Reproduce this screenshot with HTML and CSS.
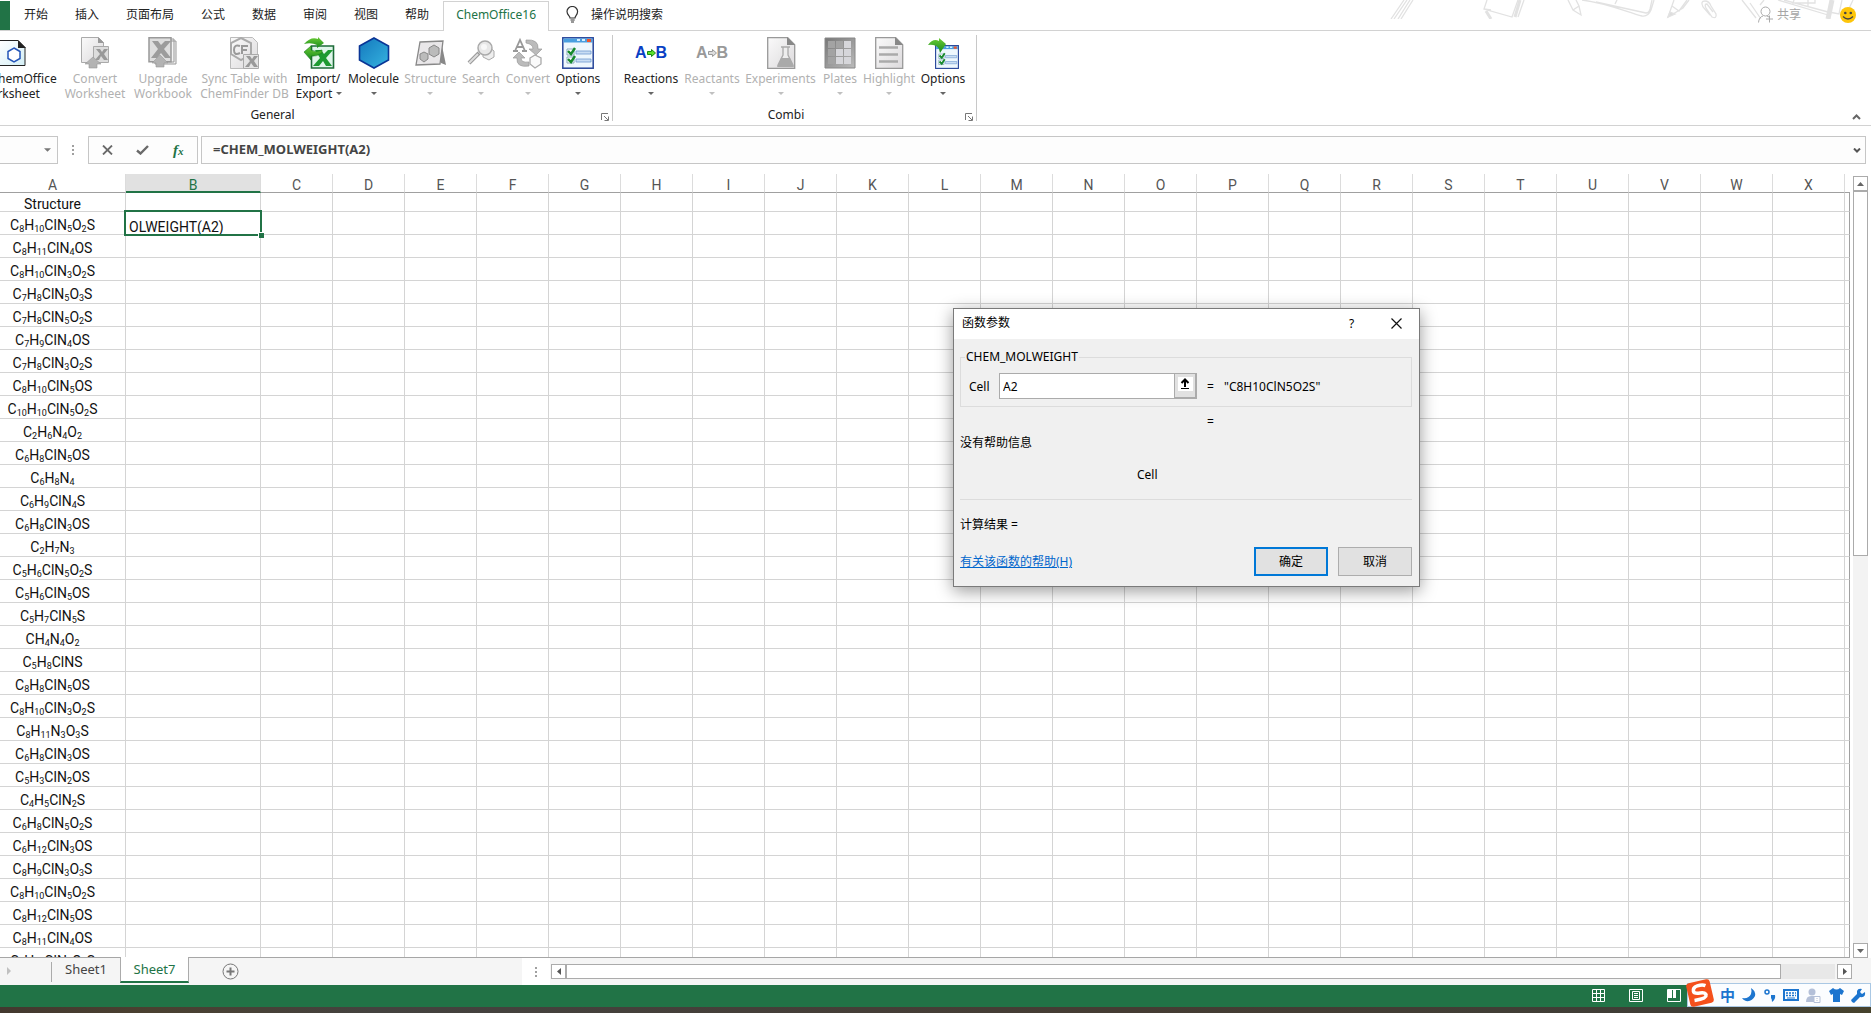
FILE: index.html
```
<!doctype html>
<html lang="zh-CN">
<head>
  <meta charset="utf-8">
  <title>Excel</title>
  <link rel="stylesheet" href="styles.css">
</head>

<body onload='start()'>

  <!-- gradients and arrows shared by the icons -->
  <svg class="defs" width="0" height="0">
    <defs>
      <linearGradient id="hexBlue" x1="0" y1="0" x2="1" y2="1"><stop offset="0" stop-color="#1478bd"/><stop offset="1" stop-color="#36b4e0"/></linearGradient>
      <linearGradient id="sheetGray" x1="0" y1="0" x2="1" y2="1"><stop offset="0" stop-color="#fafafa"/><stop offset="1" stop-color="#dcdadc"/></linearGradient>
      <linearGradient id="sheetBlue" x1="0" y1="0" x2="1" y2="1"><stop offset="0" stop-color="#ffffff"/><stop offset="1" stop-color="#d3eef5"/></linearGradient>
      <linearGradient id="plateGray" x1="0" y1="0" x2="1" y2="1"><stop offset="0" stop-color="#777"/><stop offset="1" stop-color="#bbb"/></linearGradient>
      <linearGradient id="leaf" x1="0" y1="0" x2="0" y2="1"><stop offset="0" stop-color="#6ccc35"/><stop offset="1" stop-color="#168a1c"/></linearGradient>
      <symbol id="tri" viewBox="0 0 6 3"><path d="M0 0h6L3 3z"/></symbol>
      <symbol id="launcher" viewBox="0 0 8 8"><path d="M.5 7V.5H7M3 3l4 4M7.500 3.500v4h-4" fill="none" stroke="#777"/></symbol>
      <symbol id="window" viewBox="0 0 32 32">
        <rect x=".8" y=".8" width="30.400" height="30.400" fill="#eef7fd" stroke="#27469a" stroke-width="1.500"/>
        <rect x="1.500" y="1.500" width="29" height="4" fill="#4a9fdf"/>
        <path d="M15 2h3v2h-3zM20 2h3v2h-3z" fill="#d8f0ff"/><path d="M25 2h4v3h-4z" fill="#f0552c"/>
        <path d="M14 14h15v3H14zM14 22h15v3H14z" fill="#c9ddf3" stroke="#6f9bce" stroke-width=".8"/>
        <path d="M5 12h7v6H5zM5 20h7v6H5z" fill="#fff" stroke="#8ab"/>
        <path d="M6 14l3 3 4-6M6 22l3 3 4-6" fill="none" stroke="#168a2c" stroke-width="2.400"/>
      </symbol>
    </defs>
  </svg>

  <div class="tabs">
    <div class="file"></div>
    <button class="tab">开始</button>
    <button class="tab">插入</button>
    <button class="tab">页面布局</button>
    <button class="tab">公式</button>
    <button class="tab">数据</button>
    <button class="tab">审阅</button>
    <button class="tab">视图</button>
    <button class="tab">帮助</button>
    <button class="tab selected">ChemOffice16</button>
    <button class="tab tell">
      <svg width="13" height="17" viewBox="0 0 13 17" fill="none" stroke="#333" stroke-width="1.200"><path d="M4 12c0-2-3-3-3-6.500a5.300 5 0 0 1 10.600 0C11.600 9 9 10 9 12zM4.500 14h4.200M5 16h3"/></svg>
      操作说明搜索
    </button>
    <svg class="doodle" width="491" height="19" viewBox="0 0 491 19" fill="none" stroke="#e2e2e2" stroke-width="1.300">
      <path d="M11 19L24 0M14 19L27 0M18 19L30 0M21 19L33 0"/>
      <path d="M107 0l-3 9 28 8 6-17M138 17l6-17M104 9l7 1"/>
      <path d="M106 11l5 8M135 17l5-17" stroke-width="3"/>
      <path d="M188 0l5 10 8 5-2-9-3-6M193 10l6-4"/>
      <path d="M202 0c25 3 45 12 60 16q6 1 9-6l3-10M216 2l50 11q3 0 4-4l2-9M235 4l2-4"/>
      <path d="M294 0l-6 17 15-9 6-8M292 6l7 5 8-11"/>
      <path d="M288 17l2-5 5 2z" fill="#ddd"/>
      <path d="M330 15l-7-8q-3-6 2-6 4 0 6 5l5 8q1 5-4 3l-6-9q-2-4 1-4l6 8"/>
      <path d="M362 0l14 18M370 3l11 16M384 0l-4 5"/>
      <path d="M398 0l50 15M404 0l44 12M414 0l-1 3h22V0M428 0v7"/>
      <path d="M452 0l-4 19" stroke-width="5"/>
      <path d="M462 0l-3 14-10-2M473 0l-7 15"/>
    </svg>
    <button class="share">
      <svg width="16" height="17" viewBox="0 0 16 17" fill="none" stroke="#aaa"><circle cx="7.500" cy="5.500" r="4.500"/><path d="M.5 16.500Q1 11 5 10M9 10l2 1M11.500 9.500v7M8 13h7"/></svg>
      共享
    </button>
    <button class="smile">
      <svg width="16" height="16" viewBox="0 0 16 16"><circle cx="8" cy="8" r="8" fill="#fdc50a"/><circle cx="5.300" cy="6" r="1.300" fill="#444"/><circle cx="10.800" cy="6" r="1.300" fill="#444"/><path d="M3 9.500q5 5 10 0" fill="none" stroke="#444" stroke-width="1.200"/></svg>
    </button>
  </div>

  <div class="ribbon">
    <div class="group general">
      <div class="tools">
        <button class="tool">
          <svg width="32" height="32" viewBox="0 0 32 32"><path d="M5 3.500h19l7 7v18H5z" fill="url(#sheetBlue)" stroke="#222"/><path d="M24 3v8h8z" fill="#222"/><path d="M20 11l6 3.500v7L20 25l-6-3.500v-7z" fill="#fff" stroke="#2455b8" stroke-width="1.500"/></svg>
          <span>New ChemOffice<br>Worksheet</span>
        </button>
        <button class="tool" disabled>
          <svg width="32" height="32" viewBox="0 0 32 32"><path d="M2.500.5h17l5 5v20h-22z" fill="url(#sheetGray)" stroke="#aaa"/><path d="M19 0v6h6z" fill="#999"/><path d="M14.500 9.500h15v16h-15z" fill="#ddd" stroke="#aaa"/><path d="M17 12h4l2 3 2-3h4l-4 5 4 6h-4l-3-4-2 4h-4l5-6z" fill="#999"/><path d="M14 20l8 7h-4v4h-8v-4H6z" fill="#b3b3b3" stroke="#999" stroke-width=".6"/></svg>
          <span>Convert<br>Worksheet</span>
        </button>
        <button class="tool" disabled>
          <svg width="32" height="32" viewBox="0 0 32 32"><path d="M8 4h21v23H8zM6 2h21v23H6z" fill="#f4f4f4" stroke="#999"/><path d="M2 .8h22v24H2z" fill="#dedede" stroke="#999" stroke-width="1.500"/><path d="M5 4h6l3 4 4-4h6l-7 8 7 9h-6l-4-5-4 5H4l7-9z" fill="#9c9c9c"/><path d="M13 18l8 8h-4v4H9v-4H5z" fill="#b3b3b3" stroke="#999" stroke-width=".6"/></svg>
          <span>Upgrade<br>Workbook</span>
        </button>
        <button class="tool" disabled>
          <svg width="32" height="32" viewBox="0 0 32 32"><path d="M1.500.5h22l5 5v26h-27z" fill="url(#sheetGray)" stroke="#bbb"/><path d="M12 1l10 5v11l-10 6-10-6V6z" fill="none" stroke="#aaa" stroke-width="2"/><path d="M11 9q-6-2-6 4t6 3M13 17V9h6M13 13h5" fill="none" stroke="#999" stroke-width="2"/><path d="M14.500 17.500h15v14h-15z" fill="#e4e4e4" stroke="#aaa"/><path d="M17 19h4l2 3 2-3h4l-4 5 4 6h-4l-3-4-2 4h-4l5-6z" fill="#999"/></svg>
          <span>Sync Table with<br>ChemFinder DB</span>
        </button>
        <button class="tool">
          <svg width="32" height="32" viewBox="0 0 32 32"><path d="M8.500 9h22v22h-22z" fill="#dff5ea" stroke="#1d6b38" stroke-width="1.600"/><path d="M12 13h6l3 4 4-4h5l-7 8 6 8h-6l-3-5-4 5h-6l7-8z" fill="#1d9a31"/><path d="M1 7Q8-1 15 2V0l6 6-7 5V8Q8 5 1 7z" fill="url(#leaf)"/><path d="M19 16q-6 4-11 3v4l-7-8 7-6v4q5 3 11 0z" fill="url(#leaf)" stroke="#147a1c" stroke-width=".6"/></svg>
          <span>Import/<br>Export <svg class="arrow" width="6" height="3"><use href="#tri"/></svg></span>
        </button>
        <button class="tool">
          <svg width="32" height="32" viewBox="0 0 32 32"><path d="M16 1l14.500 8v14L16 31 1.500 23V9z" fill="url(#hexBlue)" stroke="#0a3596" stroke-width="1.600"/></svg>
          <span>Molecule<br><svg class="arrow" width="6" height="3"><use href="#tri"/></svg></span>
        </button>
        <button class="tool" disabled>
          <svg width="32" height="32" viewBox="0 0 32 32"><path d="M26 4l5 24-5-2z" fill="#888"/><path d="M5 5l23-1-3 23-24 1z" fill="#e9e7e9" stroke="#888" stroke-width="1.300"/><path d="M19 8l5 3v6l-5 3-5-3v-6zM9 15l4 2v5l-4 3-4-3v-5z" fill="#bbb" stroke="#888"/></svg>
          <span>Structure<br><svg class="arrow" width="6" height="3"><use href="#tri"/></svg></span>
        </button>
        <button class="tool" disabled>
          <svg width="32" height="32" viewBox="0 0 32 32"><path d="M24 10l5 4v6l-5 3-6-3v-6z" fill="#eee" stroke="#aaa"/><path d="M14 16L4 26" stroke="#999" stroke-width="4"/><path d="M13 17L4 26" stroke="#ddd" stroke-width="2"/><circle cx="20" cy="11" r="7" fill="#e8e8e8" stroke="#aaa" stroke-width="1.500"/><circle cx="19" cy="10" r="3" fill="#f8f8f8"/></svg>
          <span>Search<br><svg class="arrow" width="6" height="3"><use href="#tri"/></svg></span>
        </button>
        <button class="tool" disabled>
          <svg width="32" height="32" viewBox="0 0 32 32"><path d="M3 14l5-11 5 11M5 10h6M1 14h5M10 14h5" fill="none" stroke="#999" stroke-width="1.800"/><path d="M14 3q13-1 12 9h4l-6 6-7-6h4q0-5-7-6z" fill="#bbb" stroke="#999" stroke-width=".7"/><path d="M17 29Q4 31 5 21H1l6-6 6 6H9q0 5 8 4z" fill="#bbb" stroke="#999" stroke-width=".7"/><path d="M23 18l6 3v6l-6 4-5-4v-6z" fill="#fafafa" stroke="#aaa" stroke-width="1.300"/></svg>
          <span>Convert<br><svg class="arrow" width="6" height="3"><use href="#tri"/></svg></span>
        </button>
        <button class="tool">
          <svg width="32" height="32"><use href="#window"/></svg>
          <span>Options<br><svg class="arrow" width="6" height="3"><use href="#tri"/></svg></span>
        </button>
      </div>
      <div class="caption">General</div>
      <svg class="launcher" width="8" height="8"><use href="#launcher"/></svg>
    </div>

    <div class="group combi">
      <div class="tools">
        <button class="tool">
          <div class="ab">A<svg width="9" height="8" viewBox="0 0 9 8"><path d="M.5 2.500h4v-2l4 3.500-4 3.500v-2h-4z" fill="#5ee02b" stroke="#1b8a12"/></svg>B</div>
          <span>Reactions<br><svg class="arrow" width="6" height="3"><use href="#tri"/></svg></span>
        </button>
        <button class="tool" disabled>
          <div class="ab">A<svg width="9" height="8" viewBox="0 0 9 8"><path d="M.5 2.500h4v-2l4 3.500-4 3.500v-2h-4z" fill="#ddd" stroke="#999"/></svg>B</div>
          <span>Reactants<br><svg class="arrow" width="6" height="3"><use href="#tri"/></svg></span>
        </button>
        <button class="tool" disabled>
          <svg width="32" height="32" viewBox="0 0 32 32"><path d="M2.700.7h20l7 7v23.600h-27z" fill="url(#sheetGray)" stroke="#999" stroke-width="1.300"/><path d="M22 0v8h8z" fill="#888"/><path d="M16 10h9M18 10v8l-5 10h15l-5-10v-8" fill="#eee" stroke="#aaa" stroke-width="1.300"/><path d="M16 21h9l4 9H12z" fill="#aaa"/></svg>
          <span>Experiments<br><svg class="arrow" width="6" height="3"><use href="#tri"/></svg></span>
        </button>
        <button class="tool" disabled>
          <svg width="32" height="32" viewBox="0 0 32 32"><path d="M1 1h30v30H1z" fill="url(#plateGray)" stroke="#888"/><path d="M4 4h7v7H4zM4 12h7v7H4zM4 20h7v7H4zM12 4h7v7h-7z" fill="#a3a3a3"/><path d="M12 12h7v7h-7zM12 20h7v7h-7zM20 4h7v7h-7zM20 12h7v7h-7zM20 20h7v7h-7z" fill="#d6d6da"/></svg>
          <span>Plates<br><svg class="arrow" width="6" height="3"><use href="#tri"/></svg></span>
        </button>
        <button class="tool" disabled>
          <svg width="32" height="32" viewBox="0 0 32 32"><path d="M2.700.7h20l7 7v23.600h-27z" fill="url(#sheetGray)" stroke="#999" stroke-width="1.300"/><path d="M22 0v8h8z" fill="#888"/><path d="M6 10.500h19M6 17.500h19M6 24.500h19" stroke="#aaa" stroke-width="2.500"/></svg>
          <span>Highlight<br><svg class="arrow" width="6" height="3"><use href="#tri"/></svg></span>
        </button>
        <button class="tool">
          <svg width="32" height="32" viewBox="0 0 32 32"><use href="#window" x="8" y="8" width="24" height="24"/><path d="M1 8Q6 1 12 4V1l7 6-6 9-1-4Q9 7 1 8z" fill="url(#leaf)"/></svg>
          <span>Options<br><svg class="arrow" width="6" height="3"><use href="#tri"/></svg></span>
        </button>
      </div>
      <div class="caption">Combi</div>
      <svg class="launcher" width="8" height="8"><use href="#launcher"/></svg>
    </div>
    <button class="collapse"><svg width="9" height="6" viewBox="0 0 9 6"><path d="M1 5l3.500-3.500L8 5" fill="none" stroke="#666" stroke-width="2"/></svg></button>
  </div>

  <div class="formulabar">
    <button class="namebox"><svg width="7" height="4" viewBox="0 0 6 3" fill="#777"><path d="M0 0h6L3 3z"/></svg></button>
    <div class="dots"><i></i><i></i><i></i></div>
    <div class="edit">
      <button><svg width="11" height="10" viewBox="0 0 11 10"><path d="M1 .5l9 9M10 .5l-9 9" stroke="#6a6a6a" stroke-width="1.800"/></svg></button>
      <button><svg width="13" height="10" viewBox="0 0 13 10"><path d="M1 5.500l3.500 3L12 1" fill="none" stroke="#6a6a6a" stroke-width="2.400"/></svg></button>
      <button class="fx"><i>f</i><i class="x">x</i></button>
    </div>
    <div class="formula">
      <input type="text" value="=CHEM_MOLWEIGHT(A2)" aria-label="Formula">
      <button><svg width="8" height="5" viewBox="0 0 8 5"><path d="M1 .5l3 3 3-3" fill="none" stroke="#555" stroke-width="2"/></svg></button>
    </div>
  </div>

  <div class="sheet">
    <div class="grid">
      <table>
        <colgroup id="cols"></colgroup>
        <thead><tr id="head"></tr></thead>
        <tbody id="rows"></tbody>
      </table>
    </div>
    <div class="vscroll">
      <button class="scrollBtn"><svg width="7" height="4" viewBox="0 0 7 4"><path d="M0 4h7L3.500 0z" fill="#666"/></svg></button>
      <div class="thumb"></div>
      <div class="track"></div>
      <button class="scrollBtn"><svg width="7" height="4" viewBox="0 0 7 4"><path d="M0 0h7L3.500 4z" fill="#666"/></svg></button>
    </div>
  </div>

  <div class="sheets">
    <div class="sheetNav"><svg width="4" height="8" viewBox="0 0 4 8"><path d="M0 0v8l4-4z" fill="#c0c0c0"/></svg></div>
    <button class="sheetTab">Sheet1</button>
    <button class="sheetTab open">Sheet7</button>
    <button class="add"><svg width="17" height="17" viewBox="0 0 17 17" fill="none" stroke="#777"><circle cx="8.500" cy="8.500" r="7.500"/><path d="M4.500 8.500h8M8.500 4.500v8" stroke-width="2"/></svg></button>
    <div class="splitter"><div class="dots"><i></i><i></i><i></i></div></div>
    <div class="hscroll">
      <button class="scrollBtn"><svg width="4" height="7" viewBox="0 0 4 7"><path d="M4 0v7L0 3.500z" fill="#555"/></svg></button>
      <div class="thumb"></div>
      <div class="track"></div>
      <button class="scrollBtn"><svg width="4" height="7" viewBox="0 0 4 7"><path d="M0 0v7l4-3.500z" fill="#555"/></svg></button>
    </div>
  </div>

  <div class="status">
    <button><svg width="13" height="13" viewBox="0 0 13 13" fill="none" stroke="#fff"><path d="M.5.5h12v12H.5zM4.500 0v13M8.500 0v13M0 4.500h13M0 8.500h13"/></svg></button>
    <button><svg width="14" height="13" viewBox="0 0 14 13" fill="none" stroke="#fff"><path d="M.5.5h13v12H.5zM3.500 2.500h7v8h-7zM5 4.500h4M5 6.500h4M5 8.500h4"/></svg></button>
    <button><svg width="14" height="13" viewBox="0 0 14 13"><path d="M.5.500h13v12H.5z" fill="none" stroke="#fff"/><path d="M1 1h4v8H1zM6 1h3v8H6z" fill="#fff"/></svg></button>
    <div class="ime">
      <svg class="sogou" width="28" height="28" viewBox="0 0 28 28"><g transform="rotate(-13 14 14)"><rect x="2" y="2" width="24" height="24" rx="3" fill="#f4501c"/><path d="M21 8q-3-2-8-1.500T8 11q0 2.500 6 3t5.500 3.500Q19 21 7 20" fill="none" stroke="#fff" stroke-width="3.600"/></g></svg>
      <span>中</span>
      <svg width="14" height="14" viewBox="0 0 14 14"><path d="M9 0q5 3 4 8-3 6-9 5-3-1-4-3 7 1 9-4 1-3 0-6z" fill="#1c75cf"/></svg>
      <svg width="12" height="14" viewBox="0 0 12 14"><circle cx="3" cy="4" r="2" fill="none" stroke="#1c75cf" stroke-width="1.500"/><path d="M7 7h4q1 4-3 7 0-3-1-4z" fill="#1c75cf"/></svg>
      <svg width="16" height="12" viewBox="0 0 16 12"><path d="M1 1h14v10H1z" fill="none" stroke="#1c75cf" stroke-width="2"/><path d="M3 4h10M3 6.500h10" stroke="#1c75cf" stroke-width="1.500" stroke-dasharray="2 1"/><path d="M4 9h8" stroke="#1c75cf"/></svg>
      <svg width="15" height="15" viewBox="0 0 15 15" fill="#b4c0d8"><circle cx="6" cy="4" r="3.500"/><path d="M0 14q0-6 5-6h4v6z"/><path d="M8 8.500h6v6H8z" fill="#fff" stroke="#b4c0d8"/><path d="M10.500 10h1v1h-1zM10.500 12h1v1h-1z"/></svg>
      <svg width="15" height="14" viewBox="0 0 15 14"><path d="M4 0q3.500 3 7 0l4 3-2 4-2-1v8H4V6L2 7 0 3z" fill="#1c75cf"/></svg>
      <svg width="15" height="15" viewBox="0 0 15 15"><path d="M14 4l-3 2-2-2 2-3Q7 0 6 3v3L0 12l1 2 2 1 6-6q6 1 5-5z" fill="#1c75cf"/></svg>
    </div>
  </div>
  <div class="taskbar"></div>

  <div class="dialog">
    <div class="title">
      <span>函数参数</span>
      <button>?</button>
      <button><svg width="11" height="11" viewBox="0 0 11 11"><path d="M.5.5l10 10M10.500.5l-10 10" stroke="#111" stroke-width="1.200"/></svg></button>
    </div>
    <div class="content">
      <fieldset>
        <legend>CHEM_MOLWEIGHT</legend>
        <div class="arg">
          <label for="cell">Cell</label>
          <input type="text" id="cell" value="A2">
          <button><svg width="15" height="14" viewBox="0 0 15 14"><path d="M0 0h15v14H0z" fill="#fff"/><path d="M7 10V3M3.500 6L7 2.500 10.500 6" fill="none" stroke="#000" stroke-width="2"/><path d="M3 11.500h8" stroke="#000"/></svg></button>
          <span class="eq">=</span>
          <span>"C8H10ClN5O2S"</span>
        </div>
      </fieldset>
      <div class="result">=</div>
      <div class="help">没有帮助信息</div>
      <div class="argname">Cell</div>
      <div class="total">计算结果 =</div>
      <div class="foot">
        <a href="#">有关该函数的帮助(H)</a>
        <button class="ok">确定</button>
        <button>取消</button>
      </div>
    </div>
  </div>

  <script>
    var letters = "ABCDEFGHIJKLMNOPQRSTUVWX".split("");
    var structures = ['C8H10ClN5O2S', 'C8H11ClN4OS', 'C8H10ClN3O2S', 'C7H8ClN5O3S',
        'C7H8ClN5O2S', 'C7H9ClN4OS', 'C7H8ClN3O2S', 'C8H10ClN5OS', 'C10H10ClN5O2S',
        'C2H6N4O2', 'C6H8ClN5OS', 'C6H8N4', 'C6H9ClN4S', 'C6H8ClN3OS', 'C2H7N3',
        'C5H6ClN5O2S', 'C5H6ClN5OS', 'C5H7ClN5S', 'CH4N4O2', 'C5H8ClNS', 'C8H8ClN5OS',
        'C8H10ClN3O2S', 'C8H11N3O3S', 'C6H8ClN3OS', 'C5H3ClN2OS', 'C4H5ClN2S',
        'C6H8ClN5O2S', 'C6H12ClN3OS', 'C8H9ClN3O3S', 'C8H10ClN5O2S', 'C8H12ClN5OS',
        'C8H11ClN4OS', 'C8H10ClN5O2S'];

    function start(){
      var cols = "";
      var head = "";
      for(var i = 0; i < letters.length; i++){
        cols += "<col class='col" + letters[i] + "'>";
        head += "<th" + (letters[i] == "B" ? " class='current'" : "") + ">" + letters[i] + "</th>";
      }
      document.getElementById("cols").innerHTML = cols + "<col class='rest'>";
      document.getElementById("head").innerHTML = head + "<th></th>";

      var empty = "";
      for(var i = 2; i <= letters.length; i++){
        empty += "<td></td>";
      }

      var markup = "<tr class='first'><td>Structure</td><td></td>" + empty + "</tr>";
      for(var i = 0; i < structures.length; i++){
        // the numbers in a formula are subscripts
        var name = structures[i].replace(/\d+/g, "<sub>$&</sub>");
        var b = "<td></td>";
        if(i == 0){
          b = "<td class='active'><input type='text' value='OLWEIGHT(A2)' aria-label='B2'><i></i></td>";
        }
        markup += "<tr><td>" + name + "</td>" + b + empty + "</tr>";
      }
      document.getElementById("rows").innerHTML = markup;
    }
  </script>

</body>
</html>
```
FILE: styles.css
```
*{
  box-sizing: border-box;
}
body{
  margin: 0;
  height: 100vh;
  display: flex;
  flex-direction: column;
  overflow: hidden;
  background: #fff;
  color: #222;
  font: 12px/15px "Noto Sans", "Noto Sans CJK SC", sans-serif;
}
button{
  margin: 0;
  padding: 0;
  border: 0;
  background: none;
  color: inherit;
  font: inherit;
  display: flex;
  align-items: center;
  justify-content: center;
}
input{
  border: 0;
  padding: 0;
  margin: 0;
  min-width: 0;
  outline: none;
  font: inherit;
  color: inherit;
}
svg{
  display: block;
  flex: none;
}
.defs{
  position: absolute;
}

/* tab strip */
.tabs{
  position: relative;
  flex: none;
  height: 31px;
  display: flex;
  border-bottom: 1px solid #d2d2d2;
}
.file{
  width: 10px;
  height: 29px;
  margin-top: 1px;
  background: #217346;
}
.tab{
  padding: 0 13px 2px 14px;
}
.selected{
  height: 30px;
  margin-top: 1px;
  margin-left: 1px;
  padding: 0 12px 4px;
  border: 1px solid #d2d2d2;
  border-bottom: 0;
  background: #fff;
  color: #217346;
}
.tell{
  padding-left: 17px;
  gap: 12px;
}
.doodle{
  position: absolute;
  right: 0;
  top: 0;
}
.share{
  position: relative;
  margin-left: auto;
  padding-bottom: 1px;
  gap: 3px;
  color: #a6a6a6;
}
.smile{
  position: relative;
  margin: 0 15px 0 39px;
}

/* ribbon */
.ribbon{
  position: relative;
  flex: none;
  height: 95px;
  display: flex;
  border-bottom: 1px solid #d2d2d2;
}
.group{
  position: relative;
  margin: 4px 0;
  border-right: 1px solid #c8c8c8;
}
.tools{
  display: grid;
}
.general{
  margin-left: -50px;
}
.general .tools{
  grid-template-columns: 103px 68px 68px 95px 53px 57px 57px 44px 50px 50px;
  padding: 0 9px 0 8px;
}
.combi .tools{
  grid-template-columns: 62px 60px 77px 42px 56px 52px;
  padding: 0 7px;
}
.tool{
  flex-direction: column;
  justify-content: flex-start;
  padding-top: 2px;
  white-space: nowrap;
  line-height: 15px;
}
.tool span{
  height: 30px;
  margin-top: 2px;
}
.tool:disabled{
  color: #b1b1b1;
}
.arrow{
  display: inline-block;
  vertical-align: 3px;
  fill: #666;
}
.tool:disabled .arrow{
  fill: #c0c0c0;
}
.ab{
  height: 32px;
  display: flex;
  align-items: center;
  color: #0a3fc4;
  font: bold 16px "Liberation Sans", sans-serif;
}
.tool:disabled .ab{
  color: #999;
}
.caption{
  margin: 6px 17px 0 0;
  text-align: center;
}
.launcher{
  position: absolute;
  right: 3px;
  bottom: 0;
}
.collapse{
  margin: auto 10px 5px auto;
}

/* formula bar */
.formulabar{
  flex: none;
  display: flex;
  padding: 10px 5px 10px 0;
}
.namebox, .edit, .formula{
  height: 28px;
  border: 1px solid #c6c6c6;
  background: #fdfdfd;
}
.namebox{
  width: 58px;
  border-left: 0;
  justify-content: flex-end;
  padding-right: 6px;
}
.dots{
  width: 30px;
  display: flex;
  flex-direction: column;
  align-items: center;
  justify-content: center;
  gap: 2px;
}
.dots i{
  width: 2px;
  height: 2px;
  background: #a0a0a0;
}
.edit{
  width: 110px;
  padding: 0 1px;
  display: grid;
  grid-template-columns: repeat(3, 1fr);
}
.fx{
  color: #217346;
  font: bold 15px "Liberation Serif", serif;
}
.x{
  font-size: 11px;
  align-self: end;
  padding-bottom: 6px;
}
.formula{
  flex: 1;
  display: flex;
  margin-left: 3px;
  padding: 0 4px 0 11px;
}
.formula input{
  flex: 1;
  padding-bottom: 2px;
  background: none;
  font-weight: bold;
  font-size: 13px;
  color: #444;
}

/* cells */
.sheet{
  flex: 1;
  min-height: 0;
  display: flex;
}
.grid{
  flex: 1;
  min-width: 0;
  overflow: hidden;
  border-bottom: 1px solid #a6a6a6;
}
table{
  width: 100%;
  table-layout: fixed;
  border-spacing: 0;
  font: 14px/18px Roboto, sans-serif;
}
col{
  width: 72px;
}
.colA{
  width: 126px;
}
.colB{
  width: 135px;
}
.rest{
  width: auto;
}
th{
  height: 19px;
  padding: 0;
  border-right: 1px solid #dcdcdc;
  border-bottom: 1px solid #a0a0a0;
  color: #555;
  font-weight: normal;
  line-height: 14px;
  vertical-align: bottom;
}
th:last-child{
  border-right: 0;
}
td{
  height: 23px;
  padding: 0;
  border-right: 1px solid #d4d4d4;
  border-bottom: 1px solid #d4d4d4;
  color: #111;
  text-align: center;
  vertical-align: bottom;
}
td:last-child{
  border-right-color: #a0a0a0;
}
td:first-child, th:first-child{
  padding-right: 20px;
}
.first td{
  height: 19px;
  line-height: 14px;
}
.current{
  background: #e1e1e1;
  border-bottom: 2px solid #217346;
  color: #217346;
  line-height: 12px;
}
sub{
  font-size: 9px;
  line-height: 0;
  vertical-align: -2px;
}
.active{
  position: relative;
}
.active input{
  position: absolute;
  left: -2px;
  top: -2px;
  width: 138px;
  height: 26px;
  padding: 7px 3px 0;
  border: 2px solid #217346;
  background: #fff;
}
.active i{
  position: absolute;
  right: -4px;
  bottom: -4px;
  width: 6px;
  height: 6px;
  border: solid #fff;
  border-width: 1px 0 0 1px;
  background: #217346;
}

/* scroll bars */
.vscroll{
  flex: none;
  display: flex;
  flex-direction: column;
  width: 15px;
  margin: 2px 3px 0;
}
.scrollBtn{
  flex: none;
  width: 15px;
  height: 15px;
  border: 1px solid #ababab;
  background: #fff;
}
.thumb{
  border: 1px solid #ababab;
  background: #fff;
}
.vscroll .thumb{
  flex: 364;
}
.vscroll .track{
  flex: 388;
  background: #f3f3f3;
}
.hscroll{
  flex: 1;
  display: flex;
  align-items: center;
  padding: 0 19px 0 1px;
}
.hscroll .thumb{
  flex: 1215;
  height: 15px;
}
.hscroll .track{
  flex: 54;
  height: 15px;
  margin-right: 2px;
  background: #e8e8e8;
}

/* sheet tabs */
.sheets{
  flex: none;
  height: 27px;
  display: flex;
  align-items: stretch;
  background: #f5f5f5;
}
.sheetNav{
  width: 52px;
  height: 20px;
  margin-top: 4px;
  padding: 5px 0 0 7px;
  border-right: 1px solid #ababab;
}
.sheetTab{
  width: 68px;
  height: 25px;
  padding-bottom: 2px;
  font-size: 13px;
  color: #444;
}
.open{
  width: 69px;
  margin-top: -1px;
  height: 26px;
  border: 1px solid #ababab;
  border-top: 0;
  border-bottom: 2px solid #217346;
  padding-bottom: 0;
  background: #fff;
  color: #217346;
}
.add{
  width: 17px;
  margin-left: 33px;
}
.splitter{
  width: 28px;
  margin-left: 283px;
  display: flex;
  justify-content: center;
  background: #fff;
}

/* status bar */
.status{
  position: relative;
  flex: none;
  height: 22px;
  display: flex;
  justify-content: flex-end;
  gap: 24px;
  padding: 0 190px 1px 0;
  background: #217346;
}
.ime{
  position: absolute;
  right: 0;
  bottom: 0;
  width: 184px;
  height: 24px;
  display: flex;
  align-items: center;
  justify-content: space-between;
  padding: 0 4px 0 32px;
  border: 1px solid #aac8e4;
  background: #fbfdff;
}
.ime span{
  color: #1c75cf;
  font: bold 15px/20px "Noto Sans CJK SC", sans-serif;
}
.sogou{
  position: absolute;
  left: -2px;
  top: -5px;
}
.taskbar{
  flex: none;
  height: 6px;
  background: linear-gradient(90deg, #43382f, #4a4030 8%, #44423f 20%, #453c33 60%, #3f3e36 90%, #46422c);
}

/* function arguments window */
.dialog{
  position: absolute;
  left: 953px;
  top: 308px;
  width: 467px;
  border: 1px solid #7a7a7a;
  background: #f0f0f0;
  box-shadow: 0 4px 16px rgba(0, 0, 0, .4);
  color: #000;
}
.title{
  height: 30px;
  display: flex;
  background: #fff;
  padding-left: 8px;
}
.title span{
  flex: 1;
  line-height: 28px;
}
.title button{
  width: 45px;
  padding-bottom: 2px;
}
.content{
  padding: 10px 7px 10px 6px;
}
fieldset{
  margin: 0;
  padding: 8px 8px 7px;
  border: 1px solid #dcdcdc;
}
legend{
  margin-left: -4px;
  padding: 0 1px;
  line-height: 16px;
}
.arg{
  display: flex;
  align-items: center;
}
.arg label{
  width: 30px;
}
.arg input{
  width: 176px;
  height: 26px;
  padding: 0 3px;
  border: 1px solid #ababab;
  background: #fff;
}
.arg button{
  width: 22px;
  height: 26px;
  padding-bottom: 4px;
  border: 1px solid #ababab;
  border-width: 1px 2px 2px 0;
  background: #e1e1e1;
}
.eq{
  width: 27px;
  padding-left: 10px;
}
.result{
  margin: 7px 0 0 247px;
}
.help{
  margin-top: 6px;
}
.argname{
  margin: 17px 0 17px 177px;
}
.total{
  padding-top: 17px;
  border-top: 1px solid #dcdcdc;
}
.foot{
  margin-top: 15px;
  display: flex;
  align-items: center;
  gap: 10px;
}
.foot a{
  flex: 1;
  color: #0066cc;
}
.foot button{
  width: 74px;
  height: 29px;
  border: 1px solid #adadad;
  background: #e1e1e1;
}
.foot .ok{
  border: 2px solid #0078d7;
}
```
